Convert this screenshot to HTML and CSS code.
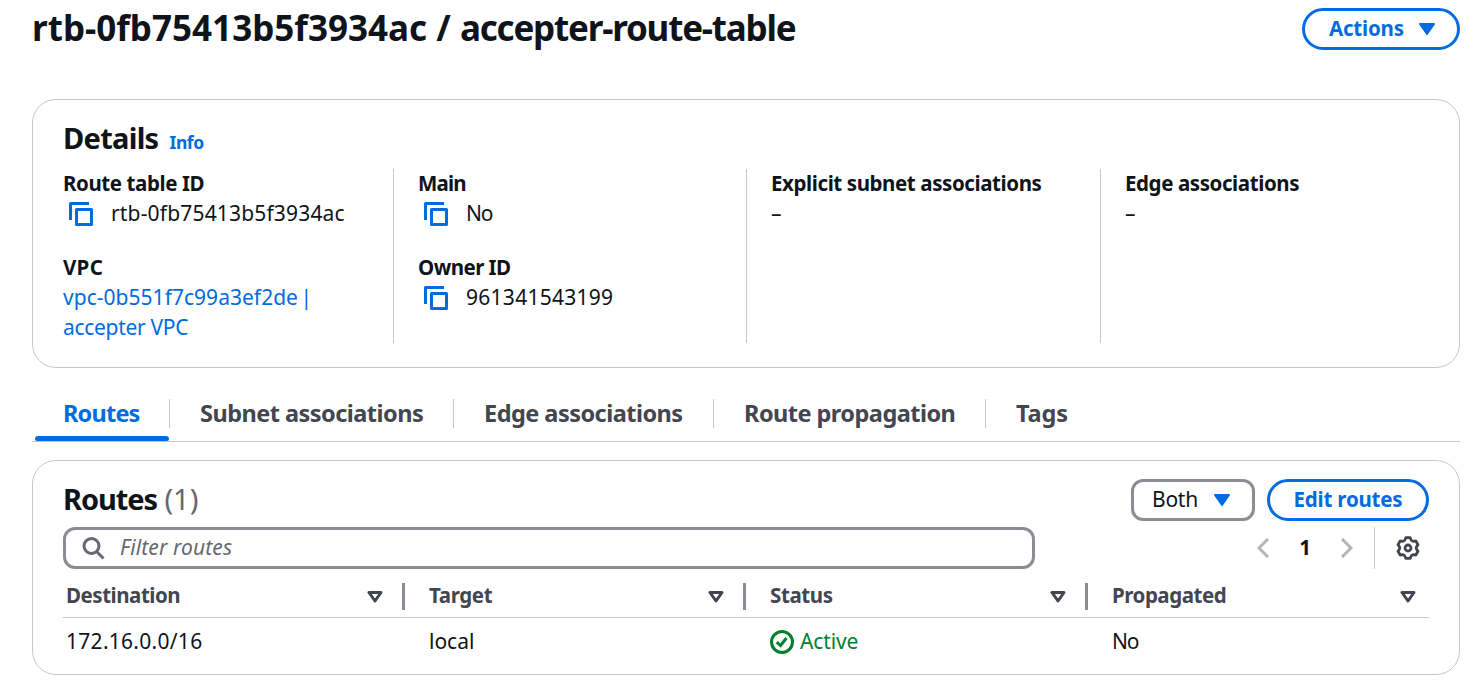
FILE: index.html
```html
<!DOCTYPE html>
<html lang="en">
<head>
<meta charset="utf-8">
<title>Route table</title>
<link rel="stylesheet" href="styles.css">
</head>
<body>
<svg class="defs" width="0" height="0" aria-hidden="true">
  <symbol id="copy" viewBox="0 0 24 24"><path d="M1.5 18V1.5H20M7.5 7.5h15v15h-15z" fill="none" stroke="currentColor" stroke-width="3" stroke-linejoin="round"/></symbol>
  <symbol id="caret" viewBox="0 0 16 12"><path d="M1 1h14L8 11z" fill="currentColor" stroke="currentColor" stroke-width="2" stroke-linejoin="round"/></symbol>
  <symbol id="sort" viewBox="0 0 16 12"><path d="M2 1.5h12L8 10z" fill="none" stroke="currentColor" stroke-width="3" stroke-linejoin="round"/></symbol>
</svg>
<main class="page">
  <header class="page-head">
    <h1 class="title"><span class="title-id">rtb-0fb75413b5f3934ac / </span><span class="title-name">accepter-route-table</span></h1>
    <button class="btn btn-actions"><span>Actions</span><svg class="caret"><use href="#caret"/></svg></button>
  </header>

  <section class="card details">
    <div class="details-head"><h2 class="heading t-details">Details</h2><a class="info">Info</a></div>
    <div class="columns">
      <div class="column">
        <dl class="pair"><dt class="t-rtid">Route table ID</dt><dd class="copyable"><svg class="copy"><use href="#copy"/></svg><span class="t-rtb">rtb-0fb75413b5f3934ac</span></dd></dl>
        <dl class="pair"><dt class="t-vpc">VPC</dt><dd class="vpc"><a class="link t-vpcid">vpc-0b551f7c99a3ef2de |</a><a class="link t-accepter">accepter VPC</a></dd></dl>
      </div>
      <div class="column">
        <dl class="pair"><dt class="t-main">Main</dt><dd class="copyable"><svg class="copy"><use href="#copy"/></svg><span class="t-no">No</span></dd></dl>
        <dl class="pair"><dt class="t-owner">Owner ID</dt><dd class="copyable"><svg class="copy"><use href="#copy"/></svg><span class="t-num">961341543199</span></dd></dl>
      </div>
      <div class="column">
        <dl class="pair"><dt class="t-explicit">Explicit subnet associations</dt><dd>–</dd></dl>
      </div>
      <div class="column">
        <dl class="pair"><dt class="t-edge">Edge associations</dt><dd>–</dd></dl>
      </div>
    </div>
  </section>

  <nav class="tabs">
    <a class="tab tab-routes active"><span>Routes</span></a>
    <a class="tab tab-subnet"><span>Subnet associations</span></a>
    <a class="tab tab-edge"><span>Edge associations</span></a>
    <a class="tab tab-prop"><span>Route propagation</span></a>
    <a class="tab tab-tags"><span>Tags</span></a>
  </nav>

  <section class="card routes">
    <div class="routes-head">
      <h2 class="heading"><span class="t-routes">Routes</span> <span class="count">(1)</span></h2>
      <div class="select"><span>Both</span><svg class="caret"><use href="#caret"/></svg></div>
      <button class="btn btn-edit"><span>Edit routes</span></button>
    </div>
    <div class="tools">
      <div class="filter">
        <svg class="search" viewBox="0 0 24 24"><path d="M22.5 22.5l-7.2-7.2"/><circle cx="10.5" cy="10" r="7.5"/></svg>
        <span class="placeholder">Filter routes</span>
      </div>
      <div class="pager">
        <svg class="chev" viewBox="0 0 12 20"><path d="M11 1L2 10l9 9"/></svg>
        <b class="page-no">1</b>
        <svg class="chev" viewBox="0 0 12 20"><path d="M1 1l9 9-9 9"/></svg>
      </div>
      <div class="settings">
        <svg class="gear" viewBox="0 0 24 24"><path d="M9.8 1.7L14.2 1.7 14.9 3.6 16.1 4.9 17.8 5.3 19.8 4.9 22 8.75 20.7 10.3 20.2 12 20.7 13.7 22 15.25 19.8 19.1 17.8 18.7 16.1 19.1 14.9 20.4 14.2 22.3 9.8 22.3 9.1 20.4 7.9 19.1 6.2 18.7 4.2 19.1 2 15.25 3.3 13.7 3.8 12 3.3 10.3 2 8.75 4.2 4.9 6.2 5.3 7.9 4.9 9.1 3.6z"/><circle cx="12" cy="12" r="3"/></svg>
      </div>
    </div>
    <div class="grid grid-head">
      <div class="cell"><span class="t-dest">Destination</span><svg class="sort"><use href="#sort"/></svg></div>
      <div class="cell"><span class="t-target">Target</span><svg class="sort"><use href="#sort"/></svg></div>
      <div class="cell"><span class="t-status">Status</span><svg class="sort"><use href="#sort"/></svg></div>
      <div class="cell"><span class="t-propd">Propagated</span><svg class="sort"><use href="#sort"/></svg></div>
    </div>
    <div class="grid grid-row">
      <div class="cell"><span class="t-ip">172.16.0.0/16</span></div>
      <div class="cell"><span class="t-local">local</span></div>
      <div class="cell status"><svg class="ok" viewBox="0 0 24 24"><circle cx="12" cy="12" r="10.5"/><path d="M6.8 12.2l3.7 3.3 6-7.5"/></svg><span class="t-active">Active</span></div>
      <div class="cell"><span class="t-no">No</span></div>
    </div>
  </section>
</main>
</body>
</html>
```
FILE: styles.css
```css
* { box-sizing: border-box; margin: 0; padding: 0; }
body { background: #fff; color: #0f141a; font: 400 21px/30px "Noto Sans", "Open Sans", sans-serif; overflow: hidden; }
svg { display: block; flex: none; }
.defs { position: absolute; }
.page { width: 1460px; padding-left: 32px; white-space: nowrap; }
.page-head { display: flex; justify-content: space-between; align-items: flex-start; height: 99px; }
.title { font-size: 35px; line-height: 45px; font-weight: 700; padding-top: 5px; }
.title-id { letter-spacing: .02px; }
.title-name { letter-spacing: -1.2px; }
.btn { display: flex; align-items: center; height: 42px; border: 3px solid #006ce0; border-radius: 21px; background: #fff; color: #006ce0; font: 700 20.5px/30px "Noto Sans", sans-serif; letter-spacing: -.2px; }
.caret { width: 16px; height: 12px; color: #006ce0; }
.btn-actions { width: 158px; margin-top: 8px; padding-left: 24px; padding-right: 22px; justify-content: space-between; }
.btn span, .select span, .placeholder, .page-no, .cell span, .copyable span, dt, dd:not(.copyable):not(.vpc), .vpc a { display: block; line-height: 28px; padding-bottom: 2px; }
.card { border: 1px solid #c6c6cd; border-radius: 24px; padding: 0 30px; }
.details { height: 269px; padding-top: 20px; }
.details-head { display: flex; align-items: baseline; height: 49px; }
.heading { font-size: 29px; line-height: 36px; font-weight: 700; }
.info { font-size: 17.5px; line-height: 30px; font-weight: 700; color: #006ce0; margin-left: 11px; letter-spacing: -.4px; }
.columns { display: grid; grid-template-columns: 330px 353px 354px 1fr; height: 174px; }
.column { display: flex; flex-direction: column; gap: 24px; }
.column + .column { border-left: 1px solid #c6c6cd; padding-left: 24px; }
dt { font-size: 20.5px; font-weight: 700; }
.copyable { display: flex; align-items: center; }
.copy { width: 24px; height: 24px; color: #006ce0; margin: 0 18px 0 6px; }
.link { color: #006ce0; }
.tabs { display: flex; height: 74px; border-bottom: 1px solid #c6c6cd; padding-top: 31px; }
.tab { height: 42px; font-size: 23.5px; font-weight: 700; line-height: 28px; color: #424650; padding-left: 30px; letter-spacing: -.53px; position: relative; background: linear-gradient(#c6c6cd, #c6c6cd) right 0 top 0 / 1px 29px no-repeat; }
.tab-routes { width: 138px; padding-left: 31px; color: #006ce0; letter-spacing: -.8px; }
.tab-subnet { width: 284px; }
.tab-edge { width: 260px; }
.tab-prop { width: 272px; }
.tab-tags { background: none; letter-spacing: -.1px; }
.active::after { content: ""; position: absolute; left: 3px; right: 1px; bottom: 0; height: 5px; border-radius: 3px 3px 2px 2px; background: #006ce0; }
.routes { margin-top: 18px; height: 215px; padding-top: 18px; }
.routes-head { display: flex; align-items: center; height: 42px; }
.routes-head .heading { flex: 1; padding-bottom: 2px; }
.count { font-weight: 400; color: #656871; }
.select { display: flex; align-items: center; justify-content: space-between; width: 124px; height: 42px; border: 3px solid #8c8c94; border-radius: 12px; padding: 0 22px 0 18px; margin-right: 12px; letter-spacing: -.25px; }
.btn-edit { width: 162px; justify-content: center; }
.tools { display: flex; align-items: center; height: 42px; margin-top: 6px; }
.filter { display: flex; align-items: center; width: 972px; height: 42px; border: 3px solid #8c8c94; border-radius: 12px; padding-left: 15px; }
.search { width: 24px; height: 24px; fill: none; stroke: #656871; stroke-width: 3; }
.placeholder { font-style: italic; color: #656871; margin-left: 15px; letter-spacing: .12px; }
.pager { display: flex; align-items: center; justify-content: space-between; width: 96px; margin-left: 222px; }
.page-no { font-weight: 700; font-size: 20.5px; }
.chev { width: 12px; height: 20px; fill: none; stroke: #b4b4bb; stroke-width: 3; }
.settings { display: flex; align-items: center; justify-content: flex-end; width: 55px; height: 42px; margin-left: 21px; border-left: 1px solid #c6c6cd; padding-right: 9px; }
.gear { width: 24px; height: 24px; fill: none; stroke: #424650; stroke-width: 2.8; stroke-linejoin: round; }
.grid { display: grid; grid-template-columns: 342px 341px 342px 341px; }
.cell { display: flex; align-items: center; padding-left: 24px; }
.cell:first-child { padding-left: 3px; }
.grid-head { height: 49px; border-bottom: 1px solid #c6c6cd; padding: 14px 0 7px; font-size: 20.5px; font-weight: 700; color: #424650; }
.grid-head .cell { justify-content: space-between; border-right: 3px solid #8c8c94; padding-right: 19px; height: 27px; }
.grid-head .cell span { margin-bottom: 1px; }
.grid-head .cell:last-child { border: 0; padding-right: 13px; }
.sort { width: 16px; height: 12px; }
.grid-row { height: 48px; }
.status { color: #00802f; gap: 6px; }
.ok { width: 24px; height: 24px; fill: none; stroke: currentColor; stroke-width: 3; }

/* Optical tracking per label */
.t-details { letter-spacing: -.7px; }
.t-routes { letter-spacing: -1.1px; }
.t-rtid, .t-explicit, .t-edge { letter-spacing: -.41px; }
.t-main { letter-spacing: -.8px; }
.t-vpc { letter-spacing: .3px; }
.t-owner { letter-spacing: -.55px; }
.t-dest, .t-propd { letter-spacing: -.47px; }
.t-target, .t-status { letter-spacing: -.38px; }
.t-active { letter-spacing: -.15px; }
.t-rtb { letter-spacing: .17px; }
.t-num { letter-spacing: .27px; }
.t-ip { letter-spacing: .28px; }
.t-vpcid { letter-spacing: .03px; word-spacing: -3px; }
.t-accepter { letter-spacing: -.3px; }
.t-no { letter-spacing: -1.2px; }
```
